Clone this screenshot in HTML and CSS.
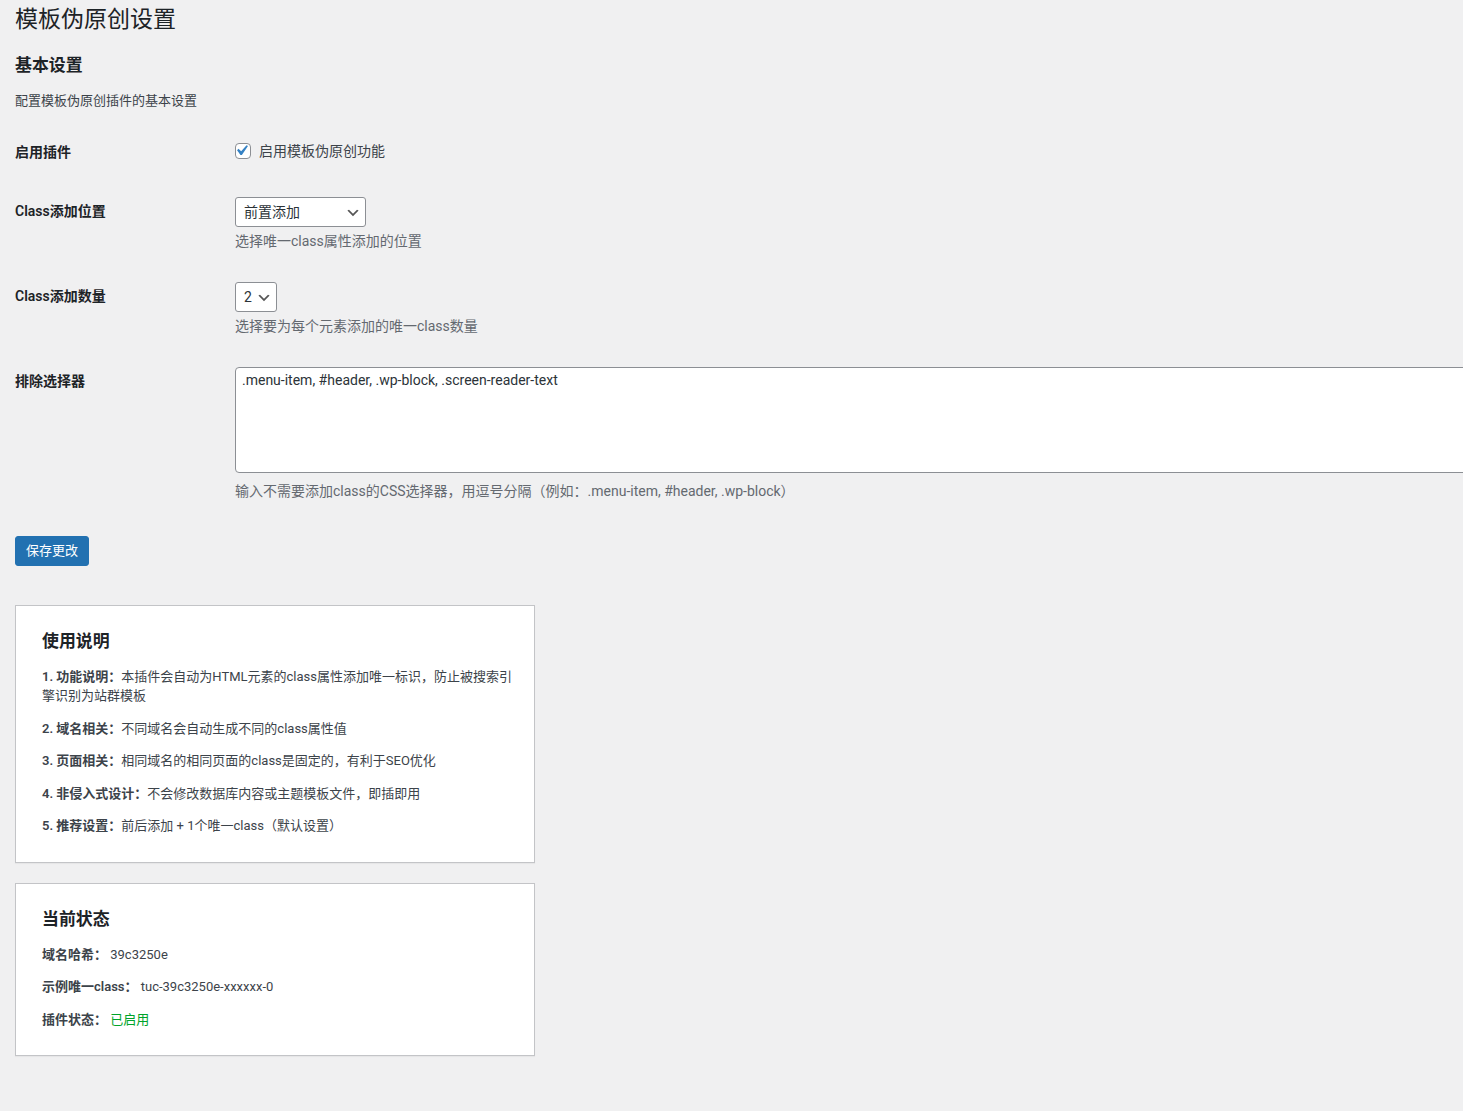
FILE: index.html
```html
<!DOCTYPE html>
<html lang="zh-CN">
<head>
  <meta charset="UTF-8" />
  <meta name="viewport" content="width=device-width, initial-scale=1.0" />
  <title>模板伪原创设置</title>
  <link rel="stylesheet" href="styles.css">
</head>
<body>
  <div class="wrap">
    <h1>模板伪原创设置</h1>

    <form method="post" action="options.php">
      <h2>基本设置</h2>
      <p>配置模板伪原创插件的基本设置</p>

      <table class="form-table">
        <tr>
          <th scope="row">启用插件</th>
          <td>
            <label class="check">
              <span class="check-box">
                <input type="checkbox" name="tuc_enabled" checked />
                <svg viewBox="0 0 20 20" aria-hidden="true"><path d="M14.83 4.89l1.34.94-5.81 8.38H9.02L5.78 9.67l1.34-1.25 2.57 2.4z" /></svg>
              </span>
              启用模板伪原创功能
            </label>
          </td>
        </tr>
        <tr>
          <th scope="row">Class添加位置</th>
          <td>
            <span class="select">
              <select name="tuc_position" class="select-position">
                <option selected>前置添加</option>
                <option>后置添加</option>
                <option>前后添加</option>
              </select>
              <svg viewBox="0 0 20 20" aria-hidden="true"><path d="M5 6l5 5 5-5 2 1-7 7-7-7 2-1z" /></svg>
            </span>
            <p class="description">选择唯一class属性添加的位置</p>
          </td>
        </tr>
        <tr>
          <th scope="row">Class添加数量</th>
          <td>
            <span class="select">
              <select name="tuc_count">
                <option>1</option>
                <option selected>2</option>
                <option>3</option>
              </select>
              <svg viewBox="0 0 20 20" aria-hidden="true"><path d="M5 6l5 5 5-5 2 1-7 7-7-7 2-1z" /></svg>
            </span>
            <p class="description">选择要为每个元素添加的唯一class数量</p>
          </td>
        </tr>
        <tr>
          <th scope="row">排除选择器</th>
          <td>
            <textarea name="tuc_exclude" rows="5" class="large-text">.menu-item, #header, .wp-block, .screen-reader-text</textarea>
            <p class="description">输入不需要添加class的CSS选择器，用逗号分隔（例如：.menu-item, #header, .wp-block）</p>
          </td>
        </tr>
      </table>

      <p class="submit"><button type="submit" class="button-primary">保存更改</button></p>
    </form>

    <div class="card">
      <h3>使用说明</h3>
      <p><strong>1. 功能说明：</strong>本插件会自动为HTML元素的class属性添加唯一标识，防止被搜索引擎识别为站群模板</p>
      <p><strong>2. 域名相关：</strong>不同域名会自动生成不同的class属性值</p>
      <p><strong>3. 页面相关：</strong>相同域名的相同页面的class是固定的，有利于SEO优化</p>
      <p><strong>4. 非侵入式设计：</strong>不会修改数据库内容或主题模板文件，即插即用</p>
      <p><strong>5. 推荐设置：</strong>前后添加 + 1个唯一class（默认设置）</p>
    </div>

    <div class="card">
      <h3>当前状态</h3>
      <p><strong>域名哈希：</strong> 39c3250e</p>
      <p><strong>示例唯一class：</strong> tuc-39c3250e-xxxxxx-0</p>
      <p><strong>插件状态：</strong> <span class="status-on">已启用</span></p>
    </div>
  </div>
</body>
</html>
```

FILE: styles.css
```css
* {
  box-sizing: border-box;
}

html {
  overflow-x: hidden;
}

body {
  margin: 0;
  background: #f0f0f1;
  color: #3c434a;
  font-family: -apple-system, BlinkMacSystemFont, "Segoe UI", Roboto, "Noto Sans CJK SC", sans-serif;
  font-size: 13px;
  line-height: 1.4em;
}

.wrap {
  padding: 0 15px 40px;
}

h1 {
  margin: 0;
  padding: 5px 0 4px;
  font-size: 23px;
  font-weight: 400;
  line-height: 1.3;
  color: #1d2327;
}

h2,
h3 {
  margin: 1em 0;
  font-size: 1.3em;
  font-weight: 600;
  color: #1d2327;
}

p {
  margin: 1em 0;
  font-size: 13px;
  line-height: 1.5;
}

strong {
  font-weight: 600;
}

/* settings table */
.form-table {
  width: 100%;
  margin-top: 0.5em;
  border-collapse: collapse;
  table-layout: fixed;
  clear: both;
}

.form-table th {
  box-sizing: content-box;
  width: 200px;
  padding: 20px 10px 20px 0;
  vertical-align: top;
  text-align: left;
  font-size: 14px;
  font-weight: 600;
  line-height: 1.3;
  color: #1d2327;
}

.form-table td {
  padding: 15px 10px;
  vertical-align: middle;
  font-size: 14px;
  line-height: 1.3;
}

.form-table td p {
  margin: 4px 0 0;
  font-size: 14px;
}

.description {
  color: #646970;
}

/* checkbox */
.check {
  display: inline-flex;
  align-items: center;
  gap: 8px;
  color: #3c434a;
  cursor: pointer;
}

.check-box {
  position: relative;
  width: 16px;
  height: 16px;
}

.check-box input {
  appearance: none;
  display: block;
  width: 16px;
  height: 16px;
  margin: 0;
  border: 1px solid #8c8f94;
  border-radius: 4px;
  background: #fff;
}

.check-box svg {
  position: absolute;
  left: -4px;
  top: -3px;
  width: 21px;
  height: 21px;
  fill: #3582c4;
  pointer-events: none;
}

/* selects */
.select {
  position: relative;
  display: inline-block;
  vertical-align: middle;
}

.select select {
  appearance: none;
  display: block;
  min-height: 30px;
  margin: 0;
  padding: 0 24px 0 8px;
  border: 1px solid #8c8f94;
  border-radius: 3px;
  background: #fff;
  color: #2c3338;
  font-family: inherit;
  font-size: 14px;
  line-height: 2;
}

.select-position {
  width: 131px;
}

.select svg {
  position: absolute;
  right: 5px;
  top: 8px;
  width: 16px;
  height: 16px;
  fill: #555;
  pointer-events: none;
}

textarea.large-text {
  display: block;
  width: 1300px;
  height: 106px;
  margin: 0 0 8px;
  padding: 2px 6px;
  border: 1px solid #8c8f94;
  border-radius: 4px;
  background: #fff;
  color: #2c3338;
  font-family: inherit;
  font-size: 14px;
  line-height: 1.42857143;
  resize: vertical;
}

/* submit */
p.submit {
  margin: 19px 0 0;
  padding: 0 0 19px;
}

.button-primary {
  min-height: 30px;
  margin: 0;
  padding: 0 10px;
  border: 1px solid #2271b1;
  border-radius: 3px;
  background: #2271b1;
  color: #fff;
  font-family: inherit;
  font-size: 13px;
  line-height: 2.15384615;
  cursor: pointer;
}

.button-primary:hover {
  background: #135e96;
  border-color: #135e96;
}

/* info boxes */
.card {
  max-width: 520px;
  min-width: 255px;
  margin-top: 20px;
  padding: 0.7em 1.2em 1em 2em;
  border: 1px solid #c3c4c7;
  background: #fff;
  box-shadow: 0 1px 1px rgba(0, 0, 0, 0.04);
}

.card p strong {
  color: #3c434a;
}

.status-on {
  color: #00a32a;
}
```
